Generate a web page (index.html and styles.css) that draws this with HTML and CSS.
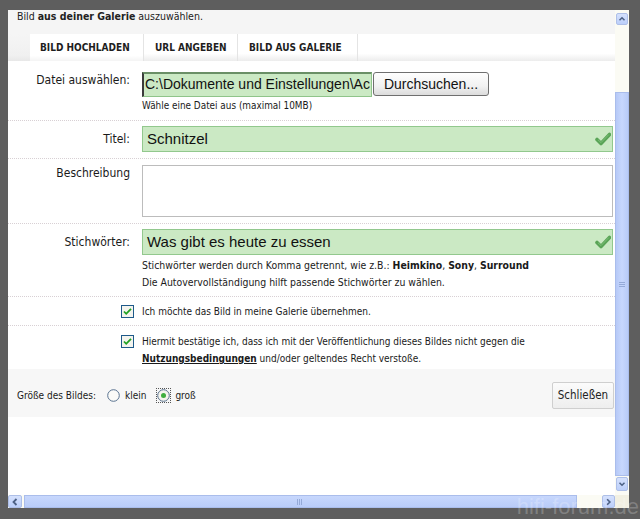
FILE: index.html
```html
<!DOCTYPE html>
<html lang="de">
<head>
<meta charset="utf-8">
<title>Bild hochladen</title>
<link rel="stylesheet" href="styles.css">
</head>
<body>
<div class="frame">
  <div class="window">
    <div class="content">
      <div class="intro">Bild <b>aus deiner Galerie</b> auszuwählen.</div>
      <div class="tabs">
        <div class="tabs-lead"></div>
        <div class="tab tab-active tab-1">BILD HOCHLADEN</div>
        <div class="tab tab-2">URL ANGEBEN</div>
        <div class="tab tab-3">BILD AUS GALERIE</div>
      </div>

      <div class="row row-file">
        <div class="label">Datei auswählen:</div>
        <div class="field">
          <div class="file">
            <div class="file-input">C:\Dokumente und Einstellungen\Ac</div>
            <div class="browse">Durchsuchen...</div>
          </div>
          <div class="hint hint-file">Wähle eine Datei aus (maximal 10MB)</div>
        </div>
      </div>

      <div class="row row-title">
        <div class="label">Titel:</div>
        <div class="field">
          <div class="input ok">Schnitzel
            <svg class="check" viewBox="0 0 16 16" width="16" height="16"><path d="M2 8.5 L6 12.5 L14.5 3.5" fill="none" stroke="#5aa457" stroke-width="3.6" stroke-linecap="round" stroke-linejoin="round"/><path d="M3 8.8 L6 11.6 L13.8 3.6" fill="none" stroke="#7cbf78" stroke-width="1"/></svg>
          </div>
        </div>
      </div>

      <div class="row row-desc">
        <div class="label label-top">Beschreibung</div>
        <div class="field">
          <div class="textarea"></div>
        </div>
      </div>

      <div class="row row-tags">
        <div class="label">Stichwörter:</div>
        <div class="field">
          <div class="input ok">Was gibt es heute zu essen
            <svg class="check" viewBox="0 0 16 16" width="16" height="16"><path d="M2 8.5 L6 12.5 L14.5 3.5" fill="none" stroke="#5aa457" stroke-width="3.6" stroke-linecap="round" stroke-linejoin="round"/><path d="M3 8.8 L6 11.6 L13.8 3.6" fill="none" stroke="#7cbf78" stroke-width="1"/></svg>
          </div>
          <div class="hint hint-tags">Stichwörter werden durch Komma getrennt, wie z.B.: <b>Heimkino</b>, <b>Sony</b>, <b>Surround</b><br>Die Autovervollständigung hilft passende Stichwörter zu wählen.</div>
        </div>
      </div>

      <div class="cbrow cbrow-1">
        <svg class="cb" viewBox="0 0 13 13" width="13" height="13"><rect x="0.5" y="0.5" width="12" height="12" fill="#f4f4ee" stroke="#1e5a8a"/><path d="M3 6.5 L5.2 8.8 L10 3.8" fill="none" stroke="#21a121" stroke-width="1.8"/></svg>
        <div class="cbtext">Ich möchte das Bild in meine Galerie übernehmen.</div>
      </div>

      <div class="cbrow cbrow-2">
        <svg class="cb" viewBox="0 0 13 13" width="13" height="13"><rect x="0.5" y="0.5" width="12" height="12" fill="#f4f4ee" stroke="#1e5a8a"/><path d="M3 6.5 L5.2 8.8 L10 3.8" fill="none" stroke="#21a121" stroke-width="1.8"/></svg>
        <div class="cbtext">Hiermit bestätige ich, dass ich mit der Veröffentlichung dieses Bildes nicht gegen die<br><a class="terms">Nutzungsbedingungen</a> und/oder geltendes Recht verstoße.</div>
      </div>

      <div class="footer">
        <div class="size">
          <span class="size-label">Größe des Bildes:</span>
          <svg class="radio" viewBox="0 0 13 13" width="13" height="13"><circle cx="6.5" cy="6.5" r="5.8" fill="#fbfbf8" stroke="#5a7390"/></svg>
          <span class="opt">klein</span>
          <span class="radio-focus"><svg class="radio" viewBox="0 0 13 13" width="13" height="13"><circle cx="6.5" cy="6.5" r="5.8" fill="#f4f4ee" stroke="#5a7390"/><circle cx="6.5" cy="6.5" r="2.5" fill="#3fae3f"/></svg></span>
          <span class="opt">groß</span>
        </div>
        <div class="close">Schließen</div>
      </div>
    </div>

    <div class="vscroll">
      <div class="sbtn sbtn-up"><svg viewBox="0 0 12 12" width="12" height="12"><path d="M3 7.5 L6 4.5 L9 7.5" fill="none" stroke="#4d6185" stroke-width="1.8"/></svg></div>
      <div class="vtrack"></div>
      <div class="vthumb"><span class="vgrip"></span></div>
      <div class="sbtn sbtn-down"><svg viewBox="0 0 12 12" width="12" height="12"><path d="M3 4.5 L6 7.5 L9 4.5" fill="none" stroke="#4d6185" stroke-width="1.8"/></svg></div>
    </div>

    <div class="hscroll">
      <div class="sbtn sbtn-left"><svg viewBox="0 0 12 12" width="12" height="12"><path d="M7.5 3 L4.5 6 L7.5 9" fill="none" stroke="#4d6185" stroke-width="1.8"/></svg></div>
      <div class="hthumb"><span class="hgrip"></span></div>
      <div class="htrack"></div>
      <div class="sbtn sbtn-right"><svg viewBox="0 0 12 12" width="12" height="12"><path d="M4.5 3 L7.5 6 L4.5 9" fill="none" stroke="#4d6185" stroke-width="1.8"/></svg></div>
    </div>
    <div class="corner"></div>
  </div>
  <div class="watermark">hifi-forum.de</div>
</div>
</body>
</html>
```
FILE: styles.css
```css
html, body {
  margin: 0;
  padding: 0;
}
body {
  background: #5e5e5e;
  font-family: "DejaVu Sans Condensed", "DejaVu Sans", sans-serif;
  color: #1a1a1a;
}
.frame {
  position: relative;
  width: 640px;
  height: 519px;
  box-sizing: border-box;
  padding: 10px 11px 11px 8px;
  background: #5e5e5e;
}
.window {
  display: grid;
  grid-template-columns: 607px 14px;
  grid-template-rows: 485px 13px;
  background: #ffffff;
}
.content {
  overflow: hidden;
  background: #ffffff;
}
.intro {
  height: 24px;
  background: #f5f5f5;
  padding-left: 9px;
  font-size: 10.5px;
  line-height: 12px;
  color: #222;
}
.tabs {
  display: flex;
  height: 27px;
  background: linear-gradient(#ffffff 0, #ffffff 72%, #ececec 100%);
}
.tabs-lead {
  width: 22px;
  background: linear-gradient(#f5f5f5, #f0f0f0 80%, #e8e8e8);
}
.tab {
  box-sizing: border-box;
  padding-left: 11px;
  font-size: 10px;
  font-weight: bold;
  line-height: 27px;
  color: #1e1e1e;
  border-right: 1px solid #e4e4e4;
  white-space: nowrap;
}
.tab-active {
  background: linear-gradient(#ffffff 0, #ffffff 80%, #f4f4f4 100%);
  padding-left: 10px;
}
.tab-1 { width: 114px; }
.tab-2 { width: 94px; }
.tab-3 { width: 120px; }

.row {
  display: grid;
  grid-template-columns: 122px 471px;
  column-gap: 12px;
  border-bottom: 1px dotted #d8d0d4;
}
.label {
  text-align: right;
  font-size: 12px;
  line-height: 16px;
  color: #1a1a1a;
  padding-top: 5px;
}
.row-file { padding-top: 11px; height: 48px; }
.row-file .label { padding-top: 0; }
.row-title { padding: 5px 0 6px; }
.row-desc { padding: 6px 0 6px; }
.row-desc .label { padding-top: 0; }
.row-tags { padding: 5px 0 5px; }

.file {
  display: flex;
  align-items: flex-start;
}
.file-input {
  box-sizing: border-box;
  width: 230px;
  height: 25px;
  background: #cbe9c4;
  border: 1px solid #8fc48a;
  border-left: 2px solid #3b3b3b;
  border-top: 2px solid #6a8f66;
  font-family: "Liberation Sans", Arial, sans-serif;
  font-size: 14px;
  line-height: 21px;
  padding-left: 1px;
  white-space: nowrap;
  overflow: hidden;
  color: #111;
}
.browse {
  box-sizing: border-box;
  width: 116px;
  height: 24px;
  margin-left: 1px;
  border: 1px solid #6f6f6f;
  border-radius: 3px;
  background: linear-gradient(#fefefe, #f1f1f1 60%, #dcdcdc);
  font-family: "Liberation Sans", Arial, sans-serif;
  font-size: 14px;
  line-height: 22px;
  text-align: center;
  color: #111;
}
.hint {
  color: #1a1a1a;
}
.hint-file {
  font-size: 9.9px;
  margin-top: 2px;
  line-height: 14px;
}
.hint-tags {
  font-size: 10.4px;
  line-height: 17px;
  margin-top: 2px;
}
.input {
  position: relative;
  box-sizing: border-box;
  height: 26px;
  background: #cbe9c4;
  border: 1px solid #92c88d;
  font-family: "Liberation Sans", Arial, sans-serif;
  font-size: 15px;
  line-height: 24px;
  padding-left: 4px;
  color: #111;
}
.check {
  position: absolute;
  right: 1px;
  top: 4px;
}
.textarea {
  box-sizing: border-box;
  height: 52px;
  border: 1px solid #bcbcbc;
  background: #ffffff;
}

.cbrow {
  display: flex;
  align-items: flex-start;
  padding-left: 113px;
  border-bottom: 1px dotted #d8d0d4;
}
.cb {
  flex: none;
  margin-right: 8px;
}
.cbtext {
  font-size: 10px;
  line-height: 17px;
  color: #1a1a1a;
}
.cbrow-1 { height: 22px; padding-top: 6px; }
.cbrow-1 .cb { margin-top: 2px; }
.cbrow-2 { height: 36px; padding-top: 7px; border-bottom: 0; }
.cbrow-2 .cb { margin-top: 2px; }
.terms {
  font-weight: bold;
  text-decoration: underline;
  color: #1a1a1a;
}
.footer {
  display: flex;
  align-items: center;
  justify-content: space-between;
  height: 48px;
  background: #f7f7f7;
  padding: 0 1px 0 9px;
}
.size {
  display: flex;
  align-items: center;
  font-size: 10px;
  color: #1a1a1a;
  padding-top: 4px;
}
.size-label { margin-right: 11px; }
.radio { display: block; }
.opt { margin-left: 5px; margin-right: 10px; }
.radio-focus {
  outline: 1px dotted #555;
  outline-offset: 0;
  margin-left: 1px;
}
.close {
  box-sizing: border-box;
  width: 62px;
  height: 27px;
  margin-top: 4px;
  border: 1px solid #cfcfcf;
  border-radius: 2px;
  background: linear-gradient(#fbfbfb, #eeeeee);
  font-size: 11.5px;
  line-height: 25px;
  text-align: center;
  color: #222;
}

.vscroll {
  display: flex;
  flex-direction: column;
  background: #fbfbf4;
  padding-top: 3px;
  box-sizing: border-box;
}
.sbtn {
  box-sizing: border-box;
  display: flex;
  align-items: center;
  justify-content: center;
  background: linear-gradient(#d5e1fd, #bccffa);
  border: 1px solid #aebfe8;
  border-radius: 2px;
}
.sbtn svg { display: block; }
.sbtn-up { height: 12px; margin: 0 1px; }
.vtrack { height: 67px; }
.vthumb {
  box-sizing: border-box;
  height: 384px;
  background: linear-gradient(90deg, #b6c9f7, #c7d7fd 50%, #b8cbf7);
  border: 1px solid #aabdeb;
  display: flex;
  align-items: center;
  justify-content: center;
}
.vgrip {
  width: 6px;
  height: 5px;
  background: repeating-linear-gradient(#95aad8 0, #95aad8 1px, transparent 1px, transparent 2px);
}
.sbtn-down { height: 14px; margin: 1px 1px 0; }

.hscroll {
  display: flex;
  background: #fbfbf4;
}
.sbtn-left { width: 14px; height: 13px; }
.hthumb {
  box-sizing: border-box;
  width: 553px;
  margin-left: 2px;
  height: 13px;
  background: linear-gradient(#c7d7fd, #b9ccf8);
  border: 1px solid #aabdeb;
  display: flex;
  align-items: center;
  justify-content: center;
}
.hgrip {
  width: 6px;
  height: 6px;
  background: repeating-linear-gradient(90deg, #95aad8 0, #95aad8 1px, transparent 1px, transparent 2px);
  margin-left: -1px;
}
.htrack { width: 25px; }
.sbtn-right { width: 13px; height: 13px; }
.corner { background: #f2f0e2; }

.watermark {
  position: absolute;
  right: 1px;
  bottom: 0;
  font-family: "Liberation Sans", Arial, sans-serif;
  font-size: 22px;
  line-height: 24px;
  color: rgba(255, 255, 255, 0.22);
}
```
